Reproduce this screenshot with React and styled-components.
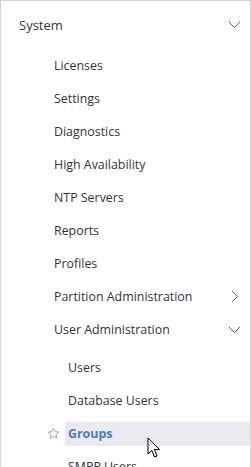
import React from "react";
import styled, { createGlobalStyle } from "styled-components";

const Global = createGlobalStyle`
  html, body { margin: 0; padding: 0; background: #ffffff; }
  body { font-family: "Open Sans", "Noto Sans", sans-serif; }
  * { box-sizing: border-box; }
`;

const Panel = styled.nav`
  position: relative;
  width: 251px;
  height: 467px;
  overflow: hidden;
  background: #ffffff;
  border-top: 1px solid #d4d4d4;
  border-left: 1px solid #d4d4d4;
  border-right: 1px solid #d4d4d4;
  color: #343434;
  font-size: 12.4px;
`;

const Header = styled.div`
  display: flex;
  align-items: center;
  justify-content: space-between;
  height: 48px;
  padding: 0 9px 1px 18px;
  font-size: 13px;
`;

const List = styled.ul`
  list-style: none;
  margin: 0;
  padding: 0;
  display: flex;
  flex-direction: column;
`;

const Row = styled.li`
  display: flex;
  align-items: center;
  justify-content: space-between;
  height: 33px;
  padding: 0 9px 0 53px;
`;

const SubRow = styled.li`
  position: relative;
  display: flex;
  align-items: center;
  height: 33px;
  padding-left: 64px;
  margin-top: ${(p) => (p.$gap ? 5 : 0)}px;
`;

const Label = styled.span`
  display: flex;
  align-items: center;
  flex: 1;
  height: 24px;
  padding-left: 3px;
  background: ${(p) => (p.$active ? "#ebebef" : "transparent")};
  color: ${(p) => (p.$active ? "#4a7dc8" : "#343434")};
  font-weight: ${(p) => (p.$active ? 700 : 400)};
`;

const Star = styled.svg`
  position: absolute;
  left: 46px;
  top: 10px;
`;

const Cursor = styled.svg`
  position: absolute;
  left: 146px;
  top: 436px;
`;

const Chevron = ({ dir }) => (
  <svg width="13" height="13" viewBox="0 0 13 13">
    {dir === "down" ? (
      <polyline points="1,4 6.5,9.5 12,4" fill="none" stroke="#5a5f6a" strokeWidth="1" />
    ) : (
      <polyline points="4,1 9.5,6.5 4,12" fill="none" stroke="#5a5f6a" strokeWidth="1" />
    )}
  </svg>
);

const items = [
  "Licenses",
  "Settings",
  "Diagnostics",
  "High Availability",
  "NTP Servers",
  "Reports",
  "Profiles",
];

export default function App() {
  return (
    <>
      <Global />
      <Panel>
        <Header>
          <span>System</span>
          <Chevron dir="down" />
        </Header>
        <List>
          {items.map((t) => (
            <Row key={t}>
              <span>{t}</span>
            </Row>
          ))}
          <Row>
            <span>Partition Administration</span>
            <Chevron dir="right" />
          </Row>
          <Row>
            <span>User Administration</span>
            <Chevron dir="down" />
          </Row>
          <SubRow $gap>
            <Label>Users</Label>
          </SubRow>
          <SubRow>
            <Label>Database Users</Label>
          </SubRow>
          <SubRow>
            <Star width="13" height="13" viewBox="0 0 24 24">
              <polygon
                points="12,2 14.9,8.6 22,9.3 16.6,14 18.2,21 12,17.3 5.8,21 7.4,14 2,9.3 9.1,8.6"
                fill="none"
                stroke="#9a9a9a"
                strokeWidth="1.6"
                strokeLinejoin="round"
              />
            </Star>
            <Label $active>Groups</Label>
          </SubRow>
          <SubRow>
            <Label>SMPP Users</Label>
          </SubRow>
        </List>
        <Cursor width="14" height="22" viewBox="0 0 14 22">
          <path
            d="M1 1 L1 17 L4.8 13.4 L7.6 20 L10 19 L7.3 12.6 L12.6 12.6 Z"
            fill="#ffffff"
            stroke="#000000"
            strokeWidth="1"
            strokeLinejoin="round"
          />
        </Cursor>
      </Panel>
    </>
  );
}
